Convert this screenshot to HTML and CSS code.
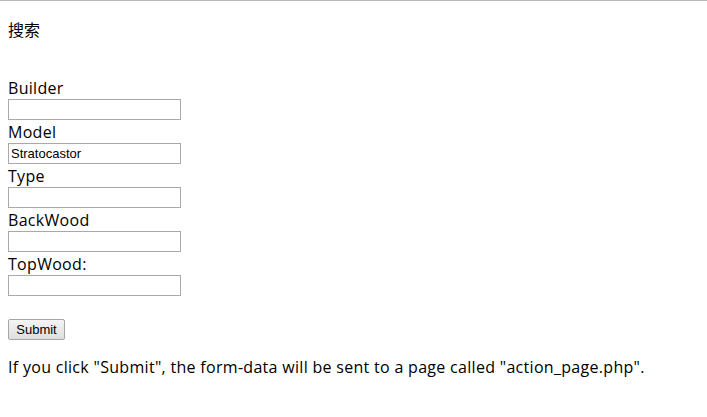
FILE: index.html
```html
<!DOCTYPE html>
<html>
<head>
<meta charset="utf-8">
<link rel="stylesheet" href="styles.css">
</head>
<body>
<div class="topline"></div>
<div class="page">
  <div class="title">搜索</div>
  <form class="form">
    <label class="lbl">Builder</label>
    <input class="field" type="text">
    <label class="lbl">Model</label>
    <input class="field" type="text" value="Stratocastor">
    <label class="lbl">Type</label>
    <input class="field" type="text">
    <label class="lbl">BackWood</label>
    <input class="field" type="text">
    <label class="lbl">TopWood:</label>
    <input class="field" type="text">
    <button class="submit" type="button">Submit</button>
  </form>
  <p class="note">If you click "Submit", the form-data will be sent to a page called "action_page.php".</p>
</div>
</body>
</html>
```
FILE: styles.css
```css
html, body {
  margin: 0;
  padding: 0;
  background: #fff;
}
body {
  font-family: "Open Sans", "Noto Sans CJK SC", sans-serif;
  font-size: 16px;
  letter-spacing: 0.3px;
  color: #000;
}
.topline {
  height: 1px;
  background: #b9b9b9;
}
.page {
  padding: 17px 8px 0 8px;
}
.title {
  line-height: 22px;
  font-family: "Noto Sans CJK SC", sans-serif;
  font-size: 16px;
  letter-spacing: 0;
}
.form {
  display: flex;
  flex-direction: column;
  align-items: flex-start;
  margin-top: 37px;
}
.lbl {
  line-height: 22px;
  height: 22px;
}
.field {
  box-sizing: border-box;
  width: 173px;
  height: 21px;
  margin: 0 0 1px 0;
  padding: 1px 2px;
  border: 1px solid #a9a9a9;
  font-family: "Liberation Sans", Arial, sans-serif;
  font-size: 13px;
  letter-spacing: 0;
  color: #000;
  background: #fff;
}
.submit {
  margin-top: 22px;
  box-sizing: border-box;
  width: 57px;
  height: 21px;
  padding: 0;
  border: 1px solid #a6a6a6;
  border-radius: 2px;
  background: linear-gradient(#f4f4f4, #dedede);
  font-family: "Liberation Sans", Arial, sans-serif;
  font-size: 13px;
  letter-spacing: 0;
  color: #000;
}
.note {
  margin: 16px 0 0 0;
  line-height: 22px;
}
```
